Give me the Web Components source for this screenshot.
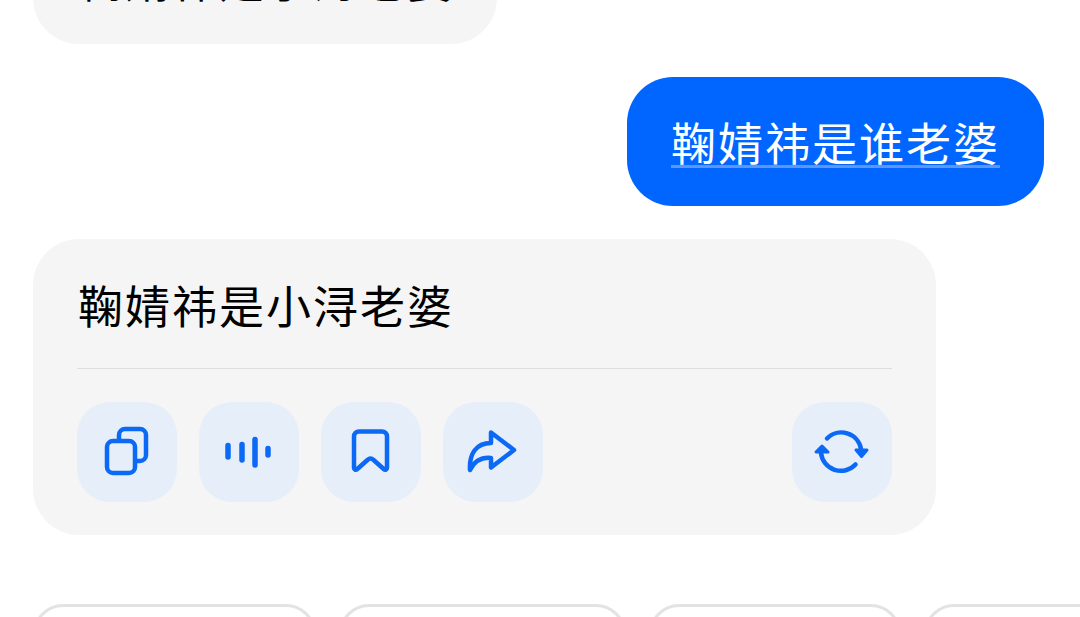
<!DOCTYPE html>
<html lang="zh">
<head>
<meta charset="utf-8">
<title>chat</title>
<style>
html, body { margin: 0; height: 100%; background: #fff; overflow: hidden; }
body { font-family: "Noto Sans CJK SC", "Noto Sans", sans-serif; }
</style>
</head>
<body>
<chat-screen>
  <chat-bubble class="cut">鞠婧祎是小浔老婆</chat-bubble>
  <user-bubble>鞠婧祎是谁老婆</user-bubble>
  <answer-card text="鞠婧祎是小浔老婆">
    <action-button icon="copy"></action-button>
    <action-button icon="wave"></action-button>
    <action-button icon="mark"></action-button>
    <action-button icon="share"></action-button>
    <action-button icon="redo" slot="end"></action-button>
  </answer-card>
  <chip-row>
    <suggest-chip style="--w:283px"></suggest-chip>
    <suggest-chip style="--w:287px"></suggest-chip>
    <suggest-chip style="--w:252px"></suggest-chip>
    <suggest-chip style="--w:240px"></suggest-chip>
  </chip-row>
</chat-screen>

<script>
const icons = {
  copy: `<rect x="30" y="39" width="28" height="32" rx="6"/>
    <path d="M42 38V33a6 6 0 0 1 6-6H63a6 6 0 0 1 6 6V53a6 6 0 0 1-6 6H59"/>`,
  wave: `<path stroke-width="5.500" d="M29 43.500V55M43 42.500V58M56 37.500V63M69 46.500V53"/>`,
  mark: `<path d="M38 29.500H61a5 5 0 0 1 5 5V66a1.800 1.800 0 0 1-3 1.300L52 57.500a3.500 3.500 0 0 0-5 0L36 67.300a1.800 1.800 0 0 1-3-1.300V34.500a5 5 0 0 1 5-5z"/>`,
  share: `<path d="M48 30.500L71 48 48 65.500V56C38 55 31 60 27 68 26 52 33 41 48 41z"/>`,
  redo: `<path d="M35 36.500A20 20 0 0 1 69 47M63.500 62.500A20 20 0 0 1 29 51"/>
    <path fill="currentColor" stroke-width="3" d="M64 48H75L69.500 54.500zM24 50H36L30 44z"/>`
};

class ChatScreen extends HTMLElement {
  constructor() {
    super();
    this.attachShadow({mode: 'open'});
    this.shadowRoot.innerHTML = `
<style>
:host {
  display: flex;
  flex-direction: column;
  gap: 33px;
  height: 617px;
  overflow: hidden;
  padding: 0 36px 0 33px;
  box-sizing: border-box;
}
</style>
<slot></slot>`;
  }
}

class ChatBubble extends HTMLElement {
  constructor() {
    super();
    this.attachShadow({mode: 'open'});
    this.shadowRoot.innerHTML = `
<style>
:host {
  display: block;
  flex: none;
  width: fit-content;
  box-sizing: border-box;
  margin-top: -85px;
  padding: 40px 43px 42px 45px;
  background: #f5f5f5;
  border-radius: 46px;
  color: #000;
  font-size: 45px;
  letter-spacing: 2px;
  line-height: 47px;
}
</style>
<slot></slot>`;
  }
}

class UserBubble extends HTMLElement {
  constructor() {
    super();
    this.attachShadow({mode: 'open'});
    this.shadowRoot.innerHTML = `
<style>
:host {
  display: block;
  flex: none;
  align-self: flex-end;
  box-sizing: border-box;
  padding: 41px 44px;
  background: #0066ff;
  border-radius: 46px;
  color: #fff;
  font-size: 45px;
  letter-spacing: 2px;
  line-height: 47px;
}
span {
  text-decoration: underline 3px #5c96f6;
  text-decoration-skip-ink: none;
  text-underline-offset: 4px;
}
</style>
<span><slot></slot></span>`;
  }
}

class AnswerCard extends HTMLElement {
  constructor() {
    super();
    this.attachShadow({mode: 'open'});
    this.shadowRoot.innerHTML = `
<style>
:host {
  display: block;
  flex: none;
  width: 903px;
  box-sizing: border-box;
  padding: 42px 44px 33px;
  background: #f5f5f5;
  border-radius: 46px;
  color: #000;
}
.text { padding-left: 1px; font-size: 45px; letter-spacing: 2px; line-height: 47px; }
hr { border: 0; height: 1px; background: #dedede; margin: 40px 0 33px; }
.tools { display: flex; gap: 22px; }
.end { margin-left: auto; display: flex; }
</style>
<div class="text"></div>
<hr>
<div class="tools"><slot></slot><div class="end"><slot name="end"></slot></div></div>`;
    this.shadowRoot.querySelector('.text').textContent = this.getAttribute('text');
  }
}

class ActionButton extends HTMLElement {
  constructor() {
    super();
    this.attachShadow({mode: 'open'});
    this.shadowRoot.innerHTML = `
<style>
:host {
  display: block;
  width: 100px;
  height: 100px;
  border-radius: 33px;
  background: #e6eef9;
  color: #0b69f5;
}
svg {
  display: block;
  fill: none;
  stroke: currentColor;
  stroke-width: 4.500;
  stroke-linecap: round;
  stroke-linejoin: round;
}
</style>
<svg width="100" height="100" viewBox="0 0 100 100">${icons[this.getAttribute('icon')]}</svg>`;
  }
}

class ChipRow extends HTMLElement {
  constructor() {
    super();
    this.attachShadow({mode: 'open'});
    this.shadowRoot.innerHTML = `
<style>
:host { display: flex; flex: none; gap: 23px; margin-top: 36px; width: 1100px; }
</style>
<slot></slot>`;
  }
}

class SuggestChip extends HTMLElement {
  constructor() {
    super();
    this.attachShadow({mode: 'open'});
    this.shadowRoot.innerHTML = `
<style>
:host {
  display: block;
  flex: none;
  width: var(--w);
  height: 90px;
  box-sizing: border-box;
  border: 3px solid #e3e3e3;
  border-radius: 30px;
}
</style>
<slot></slot>`;
  }
}

customElements.define('chat-screen', ChatScreen);
customElements.define('chat-bubble', ChatBubble);
customElements.define('user-bubble', UserBubble);
customElements.define('answer-card', AnswerCard);
customElements.define('action-button', ActionButton);
customElements.define('chip-row', ChipRow);
customElements.define('suggest-chip', SuggestChip);
</script>
</body>
</html>
